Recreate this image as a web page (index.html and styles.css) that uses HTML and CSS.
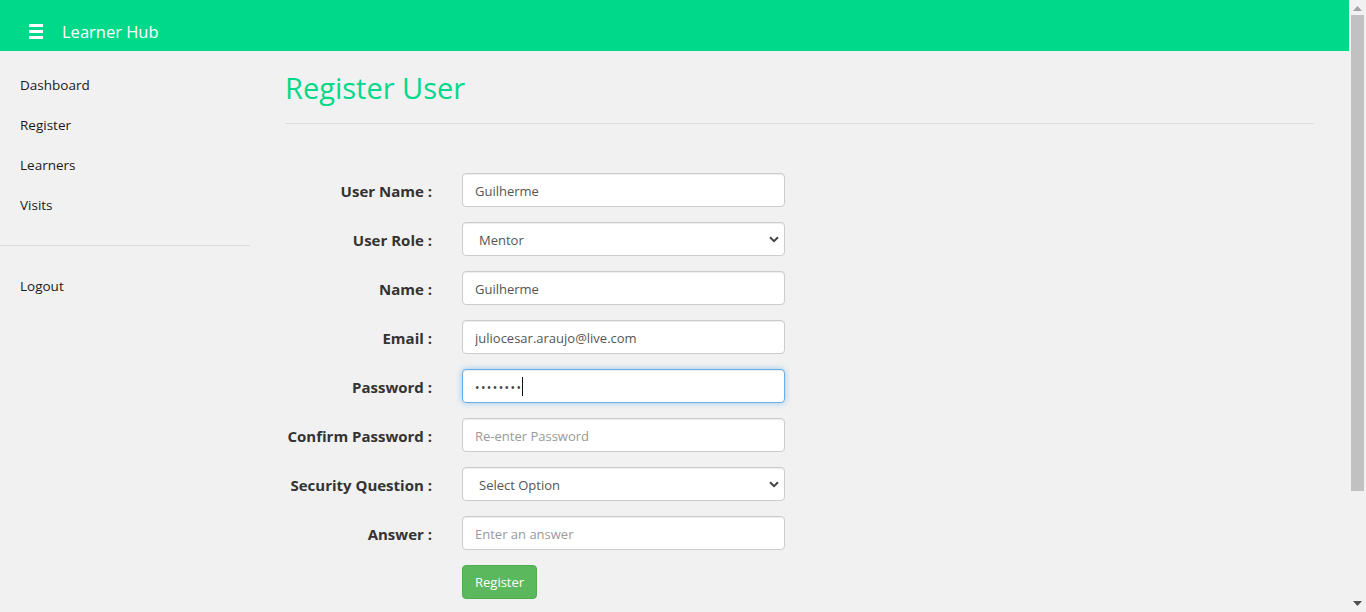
FILE: index.html
```html
<!DOCTYPE html>
<html lang="en">
<head>
<meta charset="utf-8">
<title>Learner Hub - Register User</title>
<link rel="stylesheet" href="styles.css">
</head>
<body>
<div class="page">
<header class="topbar">
  <span class="burger" aria-hidden="true"><i></i><i></i><i></i></span>
  <span class="brand">Learner Hub</span>
</header>
<div class="layout">
  <aside class="sidebar">
    <nav class="nav">
      <a href="#">Dashboard</a>
      <a href="#">Register</a>
      <a href="#">Learners</a>
      <a href="#">Visits</a>
    </nav>
    <hr class="side-rule">
    <nav class="nav">
      <a href="#">Logout</a>
    </nav>
  </aside>
  <main class="main">
    <h1 class="title">Register User</h1>
    <hr class="main-rule">
    <form class="form">
      <label class="lbl" for="un">User Name :</label>
      <input class="ctl" id="un" type="text" value="Guilherme">
      <label class="lbl" for="ur">User Role :</label>
      <div class="sel-wrap">
        <select class="ctl sel" id="ur"><option>Mentor</option><option>Learner</option></select>
        <svg class="chev" width="10" height="7" viewBox="0 0 10 7"><path d="M1 1.2 L5 5.2 L9 1.2" fill="none" stroke="#444" stroke-width="2"/></svg>
      </div>
      <label class="lbl" for="nm">Name :</label>
      <input class="ctl" id="nm" type="text" value="Guilherme">
      <label class="lbl" for="em">Email :</label>
      <input class="ctl" id="em" type="text" value="juliocesar.araujo@live.com">
      <label class="lbl" for="pw">Password :</label>
      <div class="ctl focus" id="pw"><span class="dots">••••••••</span><span class="caret"></span></div>
      <label class="lbl" for="cp">Confirm Password :</label>
      <input class="ctl" id="cp" type="password" placeholder="Re-enter Password">
      <label class="lbl" for="sq">Security Question :</label>
      <div class="sel-wrap">
        <select class="ctl sel" id="sq"><option>Select Option</option></select>
        <svg class="chev" width="10" height="7" viewBox="0 0 10 7"><path d="M1 1.2 L5 5.2 L9 1.2" fill="none" stroke="#444" stroke-width="2"/></svg>
      </div>
      <label class="lbl" for="an">Answer :</label>
      <input class="ctl" id="an" type="text" placeholder="Enter an answer">
      <span></span>
      <div><button class="btn" type="button">Register</button></div>
    </form>
  </main>
</div>
</div>
<div class="scrollbar" aria-hidden="true">
  <svg class="sb-up" width="9" height="5" viewBox="0 0 9 5"><path d="M0 5 L4.5 0 L9 5 Z" fill="#a3a3a3"/></svg>
  <div class="sb-thumb"></div>
  <svg class="sb-down" width="9" height="5" viewBox="0 0 9 5"><path d="M0 0 L4.5 5 L9 0 Z" fill="#505050"/></svg>
</div>
</body>
</html>
```
FILE: styles.css
```css
html, body {
  margin: 0;
  padding: 0;
}
body {
  background: #f1f1f1;
  font-family: "Open Sans", "Noto Sans", sans-serif;
  color: #222;
}
.page {
  margin-right: 17px;
}
.topbar {
  height: 51px;
  background: #00d98a;
  display: flex;
  align-items: center;
  padding-left: 29px;
  gap: 19px;
  box-sizing: border-box;
  padding-top: 12px;
}
.burger {
  display: flex;
  flex-direction: column;
  gap: 3px;
  width: 14px;
}
.burger i {
  display: block;
  height: 3px;
  background: #fff;
}
.brand {
  color: #fff;
  font-size: 16.5px;
}
.layout {
  display: flex;
  min-height: 692px;
}
.sidebar {
  width: 250px;
  flex: none;
  padding-top: 14px;
}
.nav {
  display: flex;
  flex-direction: column;
}
.nav a {
  display: block;
  line-height: 40px;
  padding-left: 20px;
  font-size: 13.5px;
  font-weight: 500;
  color: #1a1a1a;
  text-decoration: none;
}
.side-rule {
  border: 0;
  border-top: 1px solid #ddd;
  margin: 20px 0 20px 0;
}
.main {
  flex: 1;
  padding: 0 35px;
}
.title {
  margin: 0;
  padding-top: 17px;
  font-size: 29px;
  font-weight: 500;
  line-height: 40px;
  color: #00d98a;
}
.main-rule {
  border: 0;
  border-top: 1px solid #ddd;
  margin: 15px 0 49px 0;
}
.form {
  display: grid;
  grid-template-columns: 147px 323px;
  column-gap: 30px;
  row-gap: 15px;
  align-items: center;
}
.lbl {
  text-align: right;
  font-weight: 700;
  font-size: 15px;
  color: #333;
  white-space: nowrap;
  padding-top: 1px;
}
.ctl {
  box-sizing: border-box;
  height: 34px;
  width: 323px;
  padding: 7px 12px 5px;
  font-family: inherit;
  font-size: 13px;
  color: #555;
  background: #fff;
  border: 1px solid #ccc;
  border-radius: 4px;
  box-shadow: inset 0 1px 1px rgba(0,0,0,.075);
  outline: none;
  margin: 0;
}
.ctl::placeholder {
  color: #999;
}
.sel-wrap {
  position: relative;
  width: 323px;
  height: 34px;
}
.sel {
  appearance: none;
  -webkit-appearance: none;
  padding-left: 16px;
}
.chev {
  position: absolute;
  right: 6px;
  top: 14px;
  pointer-events: none;
}
.focus {
  display: flex;
  align-items: center;
  padding-top: 6px;
  padding-bottom: 6px;
  border-color: #66afe9;
  box-shadow: inset 0 1px 1px rgba(0,0,0,.075), 0 0 6px rgba(102,175,233,.6);
}
.dots {
  letter-spacing: 1.4px;
  font-size: 12px;
  color: #444;
  padding-top: 2px;
}
.caret {
  display: inline-block;
  width: 1px;
  height: 19px;
  background: #111;
  margin-left: 0;
}
.btn {
  height: 34px;
  padding: 0 12px;
  font-family: inherit;
  font-size: 13px;
  color: #fff;
  background: #5cb85c;
  border: 1px solid #4cae4c;
  border-radius: 4px;
  cursor: pointer;
}
.scrollbar {
  position: fixed;
  top: 0;
  right: 0;
  width: 17px;
  height: 100vh;
  background: #f1f1f1;
  display: flex;
  flex-direction: column;
  align-items: center;
}
.sb-up {
  margin-top: 6px;
  height: 5px;
}
.sb-thumb {
  margin-top: 4px;
  width: 13px;
  height: 476px;
  background: #c1c1c1;
}
.sb-down {
  margin-top: auto;
  margin-bottom: 6px;
}
```
